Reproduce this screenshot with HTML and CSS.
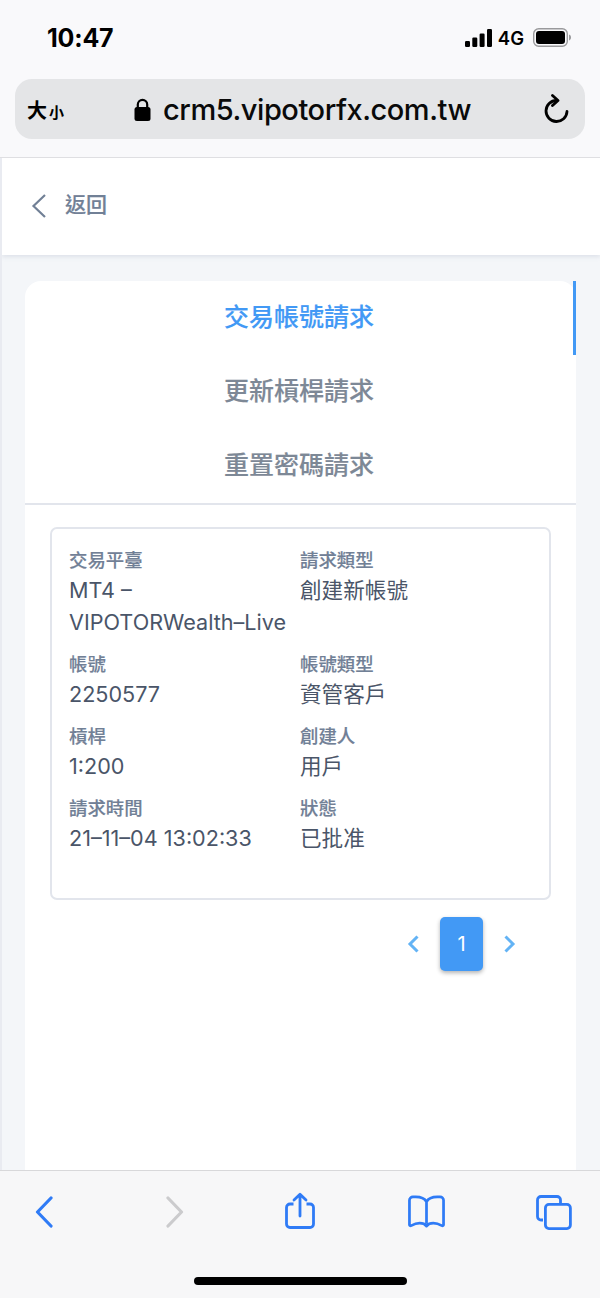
FILE: index.html
```html
<!DOCTYPE html>
<html lang="zh-Hant">
<head>
<meta charset="utf-8">
<title>交易帳號請求</title>
<link rel="stylesheet" href="styles.css">
</head>
<body>
<div class="phone">
  <header class="safari-top">
    <div class="status">
      <span class="time">10:47</span>
      <div class="status-right">
        <svg class="signal" width="27" height="18" viewBox="0 0 27 18"><rect x="0" y="12" width="5" height="6" rx="1.2"/><rect x="7.3" y="8.5" width="5" height="9.5" rx="1.2"/><rect x="14.6" y="4.500" width="5" height="13.5" rx="1.2"/><rect x="22" y="0" width="5" height="18" rx="1.2"/></svg>
        <span class="net">4G</span>
        <svg class="battery" width="38" height="19" viewBox="0 0 38 19"><rect x="0.7" y="0.7" width="33.6" height="17.6" rx="5" fill="none" stroke="#9a9a9c" stroke-width="1.4"/><rect x="3" y="3" width="29" height="13" rx="3" fill="#000"/><path d="M36 6.500c1.300.4 2 1.600 2 3s-.7 2.600-2 3z" fill="#9a9a9c"/></svg>
      </div>
    </div>
    <div class="urlbar">
      <span class="aa"><span class="aa-big">大</span><span class="aa-small">小</span></span>
      <div class="address">
        <svg class="lock" width="17" height="23" viewBox="0 0 17 23"><path d="M3.800 10V6.500a4.700 4.700 0 0 1 9.400 0V10" fill="none" stroke="#000" stroke-width="2.200"/><rect x="0.500" y="9" width="16" height="14" rx="2.500" fill="#000"/></svg>
        <span class="host">crm5.vipotorfx.com.tw</span>
      </div>
      <svg class="reload" width="26" height="30" viewBox="0 0 26 30"><path d="M13.500 6.500a10.500 10.500 0 1 0 10.500 11" fill="none" stroke="#000" stroke-width="2.800" stroke-linecap="round"/><path d="M9.500 1.500l5.500 5-5.500 5" fill="none" stroke="#000" stroke-width="2.800" stroke-linecap="round" stroke-linejoin="round"/></svg>
    </div>
  </header>

  <main class="page">
    <nav class="topnav">
      <svg class="nav-back" width="16" height="26" viewBox="0 0 16 26"><path d="M14 2L2.500 13 14 24" fill="none" stroke="#718096" stroke-width="2.200"/></svg>
      <span class="nav-label">返回</span>
    </nav>
    <section class="card">
      <ul class="tabs">
        <li class="tab tab-active">交易帳號請求</li>
        <li class="tab">更新槓桿請求</li>
        <li class="tab">重置密碼請求</li>
      </ul>
      <div class="card-body">
        <article class="record">
          <dl class="fields">
            <div class="field"><dt>交易平臺</dt><dd>MT4 – VIPOTORWealth–Live</dd></div>
            <div class="field"><dt>請求類型</dt><dd>創建新帳號</dd></div>
            <div class="field"><dt>帳號</dt><dd>2250577</dd></div>
            <div class="field"><dt>帳號類型</dt><dd>資管客戶</dd></div>
            <div class="field"><dt>槓桿</dt><dd>1:200</dd></div>
            <div class="field"><dt>創建人</dt><dd>用戶</dd></div>
            <div class="field"><dt>請求時間</dt><dd>21–11–04 13:02:33</dd></div>
            <div class="field"><dt>狀態</dt><dd>已批准</dd></div>
          </dl>
        </article>
        <div class="pager">
          <svg class="pager-arrow" width="14" height="20" viewBox="0 0 14 20"><path d="M10.500 2.500L3 10l7.500 7.500" fill="none" stroke="#63b3f5" stroke-width="3"/></svg>
          <span class="pager-current">1</span>
          <svg class="pager-arrow" width="14" height="20" viewBox="0 0 14 20"><path d="M3.500 2.500L11 10l-7.500 7.500" fill="none" stroke="#63b3f5" stroke-width="3"/></svg>
        </div>
      </div>
    </section>
  </main>

  <footer class="toolbar">
    <div class="tool-icons">
      <svg class="tool-back" width="18" height="32" viewBox="0 0 18 32"><path d="M16 2L2.500 16 16 30" fill="none" stroke="#2f7bf6" stroke-width="3.200" stroke-linecap="round" stroke-linejoin="round"/></svg>
      <svg class="tool-forward" width="18" height="32" viewBox="0 0 18 32"><path d="M2 2l13.500 14L2 30" fill="none" stroke="#cbcbcd" stroke-width="3.200" stroke-linecap="round" stroke-linejoin="round"/></svg>
      <svg class="tool-share" width="30" height="37" viewBox="0 0 30 37"><path d="M8.500 12H5a3.500 3.500 0 0 0-3.500 3.500v16.500A3.500 3.500 0 0 0 5 35.500h20a3.500 3.500 0 0 0 3.500-3.500V15.500A3.500 3.500 0 0 0 25 12h-3.500" fill="none" stroke="#2f7bf6" stroke-width="2.800"/><path d="M15 24V2.500M9 8L15 2.200 21 8" fill="none" stroke="#2f7bf6" stroke-width="2.800" stroke-linecap="round" stroke-linejoin="round"/></svg>
      <svg class="tool-book" width="37" height="33" viewBox="0 0 38 33"><path d="M19 6.500C17 3 13 1.500 8 1.500H5A3.500 3.500 0 0 0 1.500 5v25c0 1 .8 1.500 1.800 1C6 29.500 8.500 28.500 12 28.500c3 0 5.500 1 7 3 1.500-2 4-3 7-3 3.500 0 6 1 8.700 2.500 1 .5 1.800 0 1.800-1V5A3.500 3.500 0 0 0 33 1.500h-3C25 1.500 21 3 19 6.500zM19 6.500V29" fill="none" stroke="#2f7bf6" stroke-width="2.800" stroke-linejoin="round"/></svg>
      <svg class="tool-tabs" width="36" height="35" viewBox="0 0 36 35"><path d="M7 25H5a3.500 3.500 0 0 1-3.500-3.500V5A3.500 3.500 0 0 1 5 1.500h16A3.500 3.500 0 0 1 24.500 5v3" fill="none" stroke="#2f7bf6" stroke-width="2.800"/><rect x="9.400" y="9.400" width="25" height="24.200" rx="3.500" fill="none" stroke="#2f7bf6" stroke-width="2.800"/></svg>
    </div>
    <div class="home-bar"></div>
  </footer>
</div>
</body>
</html>
```

FILE: styles.css
```css
* { box-sizing: border-box; }
html, body { margin: 0; padding: 0; }
body {
  width: 600px;
  height: 1298px;
  overflow: hidden;
  background: #f4f6f9;
  font-family: Inter, "Noto Sans CJK TC", sans-serif;
}
.phone { display: flex; flex-direction: column; width: 600px; height: 1298px; overflow: hidden; }

.safari-top {
  flex: none;
  height: 158px;
  padding: 0 15px;
  background: #f9f9fb;
  border-bottom: 1px solid #dfdfe2;
}
.status {
  display: flex;
  align-items: center;
  justify-content: space-between;
  height: 79px;
  padding: 0 13px 4px 32px;
}
.time { font-size: 25px; font-weight: 700; color: #000; letter-spacing: -0.2px; }
.status-right { display: flex; align-items: center; }
.signal { fill: #000; margin-left: -1px; }
.net { margin: 0 9px 0 6px; font-size: 18.5px; font-weight: 600; color: #000; }
.battery { margin-right: 1px; }

.urlbar {
  display: flex;
  align-items: center;
  height: 60px;
  padding: 0 16px 0 12px;
  border-radius: 17px;
  background: #e4e5e7;
}
.aa { display: flex; align-items: baseline; width: 107px; font-weight: 700; color: #000; }
.aa-big { font-size: 20px; }
.aa-small { margin-left: 2px; font-size: 15px; }
.address { display: flex; align-items: center; flex: 1; }
.lock { margin-right: 12px; }
.host { font-size: 29px; font-weight: 500; color: #0a0a0a; letter-spacing: -0.45px; }

.page {
  flex: 1;
  min-height: 0;
  overflow: hidden;
  border-left: 2px solid #e9ebf1;
}
.topnav {
  display: flex;
  align-items: center;
  height: 97px;
  padding: 0 0 2px 29px;
  background: #fff;
  box-shadow: 0 2px 4px rgba(160, 170, 190, 0.25);
}
.nav-label {
  margin: 0 0 6px 18px;
  font-size: 21px;
  font-weight: 500;
  color: #718096;
  -webkit-text-stroke: 0.2px #718096;
}

.card {
  width: 551px;
  height: 900px;
  margin: 26px 0 0 23px;
  border-radius: 16px 16px 0 0;
  background: #fff;
}
.tabs {
  list-style: none;
  margin: 0;
  padding: 0;
  border-bottom: 2px solid #e2e5ec;
}
.tab {
  height: 74px;
  line-height: 72px;
  text-align: center;
  font-size: 25px;
  font-weight: 500;
  color: #7d8896;
  -webkit-text-stroke: 0.15px #7d8896;
}
.tab-active { color: #4299f5; -webkit-text-stroke-color: #4299f5; border-right: 3px solid #4299f5; }
.tab:not(.tab-active) { padding-right: 3px; }

.card-body { padding: 22px 25px 0; }
.record {
  height: 373px;
  padding: 18px 18px 0 17px;
  border: 2px solid #e2e5ec;
  border-radius: 7px;
}
.fields { display: grid; grid-template-columns: 231px 1fr; row-gap: 13px; margin: 0; }
.field { min-width: 0; }
.field dt { font-size: 18.4px; line-height: 27px; font-weight: 500; color: #718096; -webkit-text-stroke: 0.15px #718096; }
.field dd { margin: 0; font-size: 21.6px; line-height: 32px; color: #4a5568; }

.pager {
  display: flex;
  align-items: center;
  justify-content: flex-end;
  gap: 19px;
  margin-top: 17px;
  padding-right: 35px;
}
.pager-current {
  display: flex;
  align-items: center;
  justify-content: center;
  width: 43px;
  height: 54px;
  border-radius: 5px;
  background: #4299f5;
  color: #fff;
  font-size: 20px;
  box-shadow: 0 2px 4px rgba(0, 0, 0, 0.3);
}

.toolbar {
  flex: none;
  height: 128px;
  background: #f7f7f8;
  border-top: 1px solid #d8d8da;
}
.tool-icons {
  display: flex;
  align-items: center;
  height: 82px;
  padding-left: 35px;
}
.tool-forward { margin-left: 113px; }
.tool-share { margin-left: 101px; margin-top: -3px; }
.tool-book { margin-left: 93px; margin-top: -1px; }
.tool-tabs { margin-left: 91px; }
.home-bar {
  width: 213px;
  height: 8px;
  margin: 24px auto 0;
  border-radius: 4px;
  background: #000;
}
```
